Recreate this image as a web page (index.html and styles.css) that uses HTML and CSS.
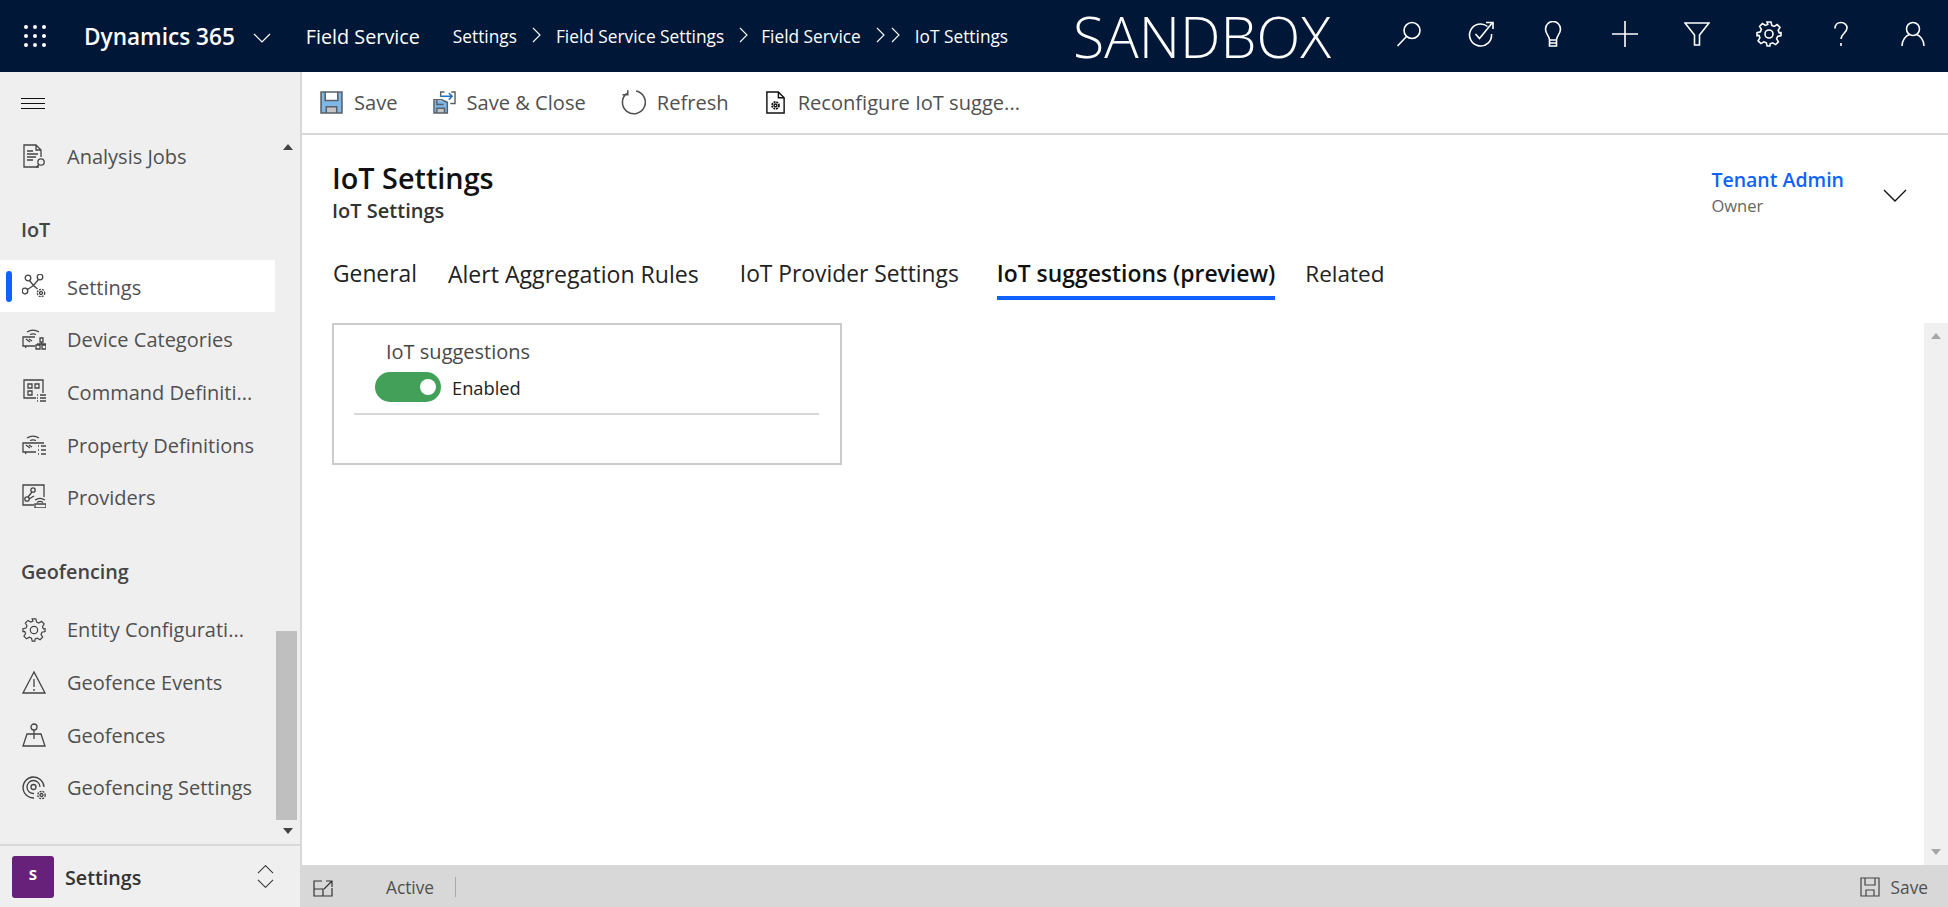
FILE: index.html
```html
<!DOCTYPE html>
<html lang="en">
<head>
<meta charset="utf-8">
<title>IoT Settings</title>
<link rel="stylesheet" href="styles.css">
</head>
<body>
<header class="topbar">
  <svg class="waffle" viewBox="0 0 22 22"><g fill="#fff"><circle cx="2" cy="2" r="2"/><circle cx="11" cy="2" r="2"/><circle cx="20" cy="2" r="2"/><circle cx="2" cy="11" r="2"/><circle cx="11" cy="11" r="2"/><circle cx="20" cy="11" r="2"/><circle cx="2" cy="20" r="2"/><circle cx="11" cy="20" r="2"/><circle cx="20" cy="20" r="2"/></g></svg>
  <span class="brand">Dynamics 365</span>
  <svg class="top-chev" viewBox="0 0 18 10"><path d="M1 1l8 8 8-8"/></svg>
  <span class="app">Field Service</span>
  <nav class="crumbs">
    <span>Settings</span>
    <svg class="crumb-chev" viewBox="0 0 9 16"><path d="M1 1l7 7-7 7"/></svg>
    <span>Field Service Settings</span>
    <svg class="crumb-chev tight" viewBox="0 0 9 16"><path d="M1 1l7 7-7 7"/></svg>
    <span>Field Service</span>
    <svg class="crumb-chev wide" viewBox="0 0 25 16"><path d="M1 1l7 7-7 7M16 1l7 7-7 7"/></svg>
    <span>IoT Settings</span>
  </nav>
  <span class="sandbox">SANDBOX</span>
  <div class="top-icons">
    <svg viewBox="0 0 26 26"><circle cx="16" cy="9.500" r="8"/><path d="M10.500 15.500L1.500 25"/></svg>
    <svg viewBox="0 0 26 26"><path d="M19.500 5.500A11 11 0 1 0 23.500 13"/><path d="M7.500 13l4 4.500L24.500 1.500M18 1.500h7v6.500"/></svg>
    <svg viewBox="0 0 26 26"><path d="M9.500 19c0-4-4-6-4-11a7.500 7.500 0 0 1 15 0c0 5-4 7-4 11zM9.500 19v6h7v-6M9.500 22h7"/></svg>
    <svg viewBox="0 0 26 26"><path d="M0 13h26M13 0v26"/></svg>
    <svg viewBox="0 0 26 26"><path d="M1 2h24L15.500 14v10h-5V14z"/></svg>
    <svg viewBox="0 0 26 26"><use href="#gear"/></svg>
    <svg viewBox="0 0 26 26"><path d="M7 7.500C7 4 9.500 1.500 13 1.500s6 2.500 6 5.500c0 5-6 5.500-6 11M13 22v3"/></svg>
    <svg viewBox="0 0 26 26"><circle cx="13" cy="8" r="6.500"/><path d="M2 25c0-6 4-10.500 7.500-11.500M24 25c0-6-4-10.500-7.500-11.500"/></svg>
  </div>
</header>

<svg class="defs" width="0" height="0">
  <defs>
    <g id="gear"><circle cx="13" cy="13" r="4"/><path d="M11 1h4l.8 3.400 2.400 1 3-1.800 2.800 2.800-1.800 3 1 2.400L25 11.600v3l-3.400.8-1 2.400 1.800 3-2.800 2.800-3-1.800-2.400 1L13.900 25h-2.800l-.8-3.200-2.400-1-3 1.800-2.800-2.800 1.800-3-1-2.400L1 14.600v-3l3.400-.8 1-2.400-1.800-3 2.800-2.800 3 1.800 2.400-1z"/></g>
  </defs>
</svg>

<div class="shell">
  <aside class="sidebar">
    <div class="ham"><span></span><span></span><span></span></div>
    <div class="nav-wrap">
      <div class="nav">
        <a class="item"><svg class="ico" viewBox="0 0 24 24"><path d="M17 23H2V1h12l5 5v7M14 1v5h5M5 7h6M5 10h11M5 13h9M5 16h6"/><circle cx="19" cy="18" r="3.200"/><path d="M17 20.500l-3 3"/></svg><span>Analysis Jobs</span></a>
        <div class="heading first">IoT</div>
        <a class="item low active"><svg class="ico" viewBox="0 0 24 24"><circle cx="6" cy="4" r="2.800"/><circle cx="18" cy="3" r="2.800"/><circle cx="3" cy="17" r="2.800"/><path d="M7.500 6.500l4 5L16.500 5.500M5.500 15.500l6-4 4 3.500"/><g transform="translate(19 19)"><circle r="1.500"/><circle r="3.700" stroke-dasharray="2 1"/></g></svg><span>Settings</span></a>
        <a class="item low"><svg class="ico" viewBox="0 0 24 24"><path d="M5 6a11 11 0 0 1 12 0M8 8.500a7 7 0 0 1 6 0M13 11H1v9h12M4 20l-.5 2M4 13l4 3M7 13l3 2M18 12h3v4h-3zM19.500 16v2M15 18h9M14 19h4v4h-4zM20 19h4v4h-4z"/></svg><span>Device Categories</span></a>
        <a class="item low"><svg class="ico" viewBox="0 0 24 24"><path d="M14 19H2V1h19v13M6 5h4v4H6zM13 5h4v4h-4zM6 12h4v4H6zM15 16h1M18 16h6M15 19h1M18 19h6M15 22h1M18 22h6"/></svg><span>Command Definiti...</span></a>
        <a class="item low"><svg class="ico" viewBox="0 0 24 24"><path d="M5 6a11 11 0 0 1 12 0M8 8.500a7 7 0 0 1 6 0M22 11H1v9h13M4 20l-.5 2M4 13l4 3M7 13l3 2M16 14h1M19 14h5M16 18h1M19 18h5M16 22h1M19 22h5"/></svg><span>Property Definitions</span></a>
        <a class="item low"><svg class="ico" viewBox="0 0 24 24"><path d="M22 13V1H1v20h11"/><circle cx="11" cy="6" r="2.200"/><circle cx="5" cy="15" r="2.200"/><path d="M10 8l-4 5M7 15l5-3M13 16a9 9 0 0 1 10 0M15 18.500a5 5 0 0 1 6 0M13 20h11v4H13z"/></svg><span>Providers</span></a>
        <div class="heading second">Geofencing</div>
        <a class="item"><svg class="ico" viewBox="0 0 26 26"><use href="#gear"/></svg><span>Entity Configurati...</span></a>
        <a class="item"><svg class="ico" viewBox="0 0 24 24"><path d="M12 2L1 23h22zM12 9v8M12 19v2"/></svg><span>Geofence Events</span></a>
        <a class="item"><svg class="ico" viewBox="0 0 24 24"><circle cx="12" cy="4" r="3"/><path d="M12 7v9M5 11h14l4 12H1zM1 23h22"/></svg><span>Geofences</span></a>
        <a class="item"><svg class="ico" viewBox="0 0 24 24"><path d="M12 22A10.500 10.500 0 1 1 22 11M12 17.500A6.500 6.500 0 1 1 18 11"/><circle cx="11.500" cy="11" r="2.500"/><g transform="translate(19.500 19)"><circle r="1.500"/><circle r="3.700" stroke-dasharray="2 1"/></g></svg><span>Geofencing Settings</span></a>
      </div>
      <div class="nav-scroll">
        <i class="tri up"></i>
        <div class="track"><div class="thumb"></div></div>
        <i class="tri down"></i>
      </div>
    </div>
    <div class="area">
      <span class="avatar">S</span>
      <span class="area-name">Settings</span>
      <svg class="updown" viewBox="0 0 18 24"><path d="M1 8.500l8-8 8 8M1 15.500l8 8 8-8"/></svg>
    </div>
  </aside>

  <main class="main">
    <div class="cmdbar">
      <button class="cmd"><svg class="cmd-ico" viewBox="0 0 22 22"><path class="fillblue" d="M1 1h20v20H1z"/><path class="fillwhite" d="M5 1h12v8H5z"/><path class="fillgrey" d="M6 15h10v6H6z"/><path d="M1 1h20v20H1zM5 1v8h12V1M6 21v-6h10v6"/></svg>Save</button>
      <button class="cmd"><svg class="cmd-ico" viewBox="0 0 24 24"><path class="fillblue" d="M1 10h14v13H1z"/><path class="fillgrey" d="M4 18h8v5H4z"/><path d="M1 9h8l6 3v11H1zM4 9v5h7M4 23v-5h8v5M8 6V1h4M19 1h4v12h-5"/><path class="arrow" d="M8 5.500h12M16.500 2l3.500 3.500L16.500 9"/></svg>Save &amp; Close</button>
      <button class="cmd"><svg class="cmd-ico plain" viewBox="0 0 24 24"><path d="M14.500 1A11 11 0 1 1 5.500 3.200M6.500 .3v4.200H1.500"/></svg>Refresh</button>
      <button class="cmd"><svg class="cmd-ico dark" viewBox="0 0 24 24"><path d="M3 1h12l6 6v16H3zM15 1v6h6"/><g transform="translate(12 15)"><circle r="1.500"/><circle r="3.600" stroke-width="1.800" stroke-dasharray="2 .9"/></g></svg>Reconfigure IoT sugge...</button>
    </div>
    <div class="form-head">
      <div class="titles">
        <h1>IoT Settings</h1>
        <div class="subtitle">IoT Settings</div>
      </div>
      <div class="owner">
        <div class="owner-text">
          <a class="owner-name">Tenant Admin</a>
          <div class="owner-role">Owner</div>
        </div>
        <svg class="owner-chev" viewBox="0 0 24 14"><path d="M1 1l11 11L23 1"/></svg>
      </div>
    </div>
    <div class="tabs">
      <a class="tab">General</a>
      <a class="tab alert">Alert Aggregation Rules</a>
      <a class="tab far">IoT Provider Settings</a>
      <a class="tab near current">IoT suggestions (preview)</a>
      <a class="tab last">Related</a>
    </div>
    <div class="content">
      <div class="canvas">
        <section class="card">
          <div class="field-label">IoT suggestions</div>
          <div class="toggle-row"><span class="toggle"><i></i></span><span>Enabled</span></div>
          <div class="rule"></div>
        </section>
      </div>
      <div class="main-scroll"><i class="tri up light"></i><i class="tri down light"></i></div>
    </div>
    <footer class="status">
      <svg class="exp" viewBox="0 0 20 17"><path d="M9 1H1v15h18V8M1 9h9v7M13 1h6v6M19 1l-8 8"/></svg>
      <span class="state">Active</span>
      <span class="sep"></span>
      <span class="status-save"><svg class="save-small" viewBox="0 0 20 20"><path d="M1 1h18v18H1zM5 1v7h10V1M6 19v-6h8v6"/></svg>Save</span>
    </footer>
  </main>
</div>
</body>
</html>
```

FILE: styles.css
```css
* { box-sizing: border-box; }
html, body { margin: 0; height: 100%; overflow: hidden; }
body {
  font-family: "Open Sans", "Noto Sans", sans-serif;
  color: #333;
  display: flex;
  flex-direction: column;
  background: #fff;
}
svg { fill: none; stroke: currentColor; flex: none; }
.defs { position: absolute; }
i { display: block; }

/* top bar */
.topbar {
  height: 72px;
  flex: none;
  background: #001737;
  color: #fff;
  display: flex;
  align-items: center;
  padding-left: 24px;
}
.waffle { width: 22px; height: 22px; margin-top: -1px; stroke: none; }
.brand { margin-left: 38px; font-size: 22.600px; font-weight: 600; white-space: nowrap; margin-top: 1px; }
.top-chev { width: 18px; height: 10px; margin-left: 18px; margin-top: 3px; stroke-width: 1.2; }
.app { margin-left: 35px; font-size: 19.800px; font-weight: 500; white-space: nowrap; margin-top: 1px; }
.crumbs { display: flex; align-items: center; margin-left: 33px; font-size: 17.300px; white-space: nowrap; }
.crumb-chev { width: 9px; height: 16px; margin: -3px 15px 0 15px; stroke-width: 1.1; }
.crumb-chev.tight { margin-right: 13px; }
.crumb-chev.wide { width: 25px; margin-right: 14px; }
.sandbox {
  margin-left: 65px;
  font-size: 57.300px;
  font-weight: 300;
  line-height: 72px;
  white-space: nowrap;
}
.top-icons {
  margin-left: auto;
  padding-right: 22px;
  display: flex;
  gap: 46px;
  margin-top: -4px;
  align-items: center;
}
.top-icons svg { width: 26px; height: 26px; stroke-width: 1.6; }

.shell { flex: 1; min-height: 0; display: flex; }

/* sidebar */
.sidebar {
  width: 302px;
  flex: none;
  background: #efefef;
  border-right: 2px solid #d8d8d8;
  display: flex;
  flex-direction: column;
}
.ham {
  height: 58px;
  flex: none;
  padding: 26px 0 0 21px;
  display: flex;
  flex-direction: column;
  gap: 4px;
}
.ham span { width: 24px; height: 1px; background: #111; display: block; }
.nav-wrap { flex: 1; min-height: 0; display: flex; border-bottom: 2px solid #d8d8d8; }
.nav { width: 275px; flex: none; }
.item {
  height: 52.600px;
  display: flex;
  align-items: center;
  padding-left: 22px;
  gap: 21px;
  font-size: 20px;
  color: #505050;
  white-space: nowrap;
  position: relative;
}
.item.low span { padding-top: 3px; }
.ico { width: 24px; height: 24px; stroke-width: 1.3; color: #444; }
.item.active { background: #fff; }
.item.active::before {
  content: "";
  position: absolute;
  left: 6px;
  top: 11px;
  width: 6px;
  height: 31px;
  border-radius: 3px;
  background: #0f62fe;
}
.heading {
  height: 57px;
  padding: 11px 0 0 21px;
  font-size: 19.800px;
  font-weight: 600;
  color: #444;
}
.heading.first { margin-top: 20px; padding-top: 13px; }
.heading.second { margin-top: 24px; }
.nav-scroll {
  width: 23px;
  margin-left: 1px;
  display: flex;
  flex-direction: column;
  align-items: center;
  padding-top: 14px;
}
.track { flex: 1; width: 100%; min-height: 0; display: flex; flex-direction: column; justify-content: flex-end; padding-bottom: 8px; }
.thumb { height: 189px; background: #bfbfbf; width: 21px; }
.tri { width: 0; height: 0; border-left: 5.500px solid transparent; border-right: 5.500px solid transparent; }
.tri.up { border-bottom: 6px solid #444; }
.tri.down { border-top: 6px solid #444; margin-bottom: 10px; }
.tri.light.up { border-bottom-color: #a6a6a6; }
.tri.light.down { border-top-color: #a6a6a6; }
.area {
  height: 61px;
  flex: none;
  display: flex;
  align-items: center;
  padding-left: 12px;
  font-size: 19.700px;
  font-weight: 600;
  color: #333;
}
.avatar {
  width: 42px;
  height: 42px;
  background: #68217a;
  color: #fff;
  border-radius: 3px;
  display: flex;
  align-items: center;
  justify-content: center;
  font-size: 15px;
  font-weight: 700;
  padding-bottom: 6px;
}
.area-name { margin-left: 11px; padding-top: 2px; }
.updown { width: 17px; height: 23px; margin-left: auto; margin-right: 26px; stroke-width: 1.1; }

/* main */
.main { flex: 1; min-width: 0; display: flex; flex-direction: column; }
.cmdbar {
  height: 63px;
  flex: none;
  border-bottom: 2px solid #d8d8d8;
  display: flex;
  align-items: center;
  padding-left: 18px;
  gap: 35px;
}
.cmd {
  border: 0;
  background: none;
  padding: 0;
  font: inherit;
  font-size: 20.100px;
  color: #505050;
  display: flex;
  align-items: center;
  gap: 11px;
  white-space: nowrap;
}
.cmd-ico { width: 23px; height: 23px; stroke-width: 1.5; color: #5a6068; }
.cmd-ico.plain { width: 25px; height: 25px; color: #505050; }
.cmd-ico.dark { color: #111; }
.fillblue { fill: #7db8e8; stroke: none; }
.fillwhite { fill: #fff; stroke: none; }
.fillgrey { fill: #c4c4c4; stroke: none; }
.arrow { stroke: #1f6fc0; }
.form-head {
  height: 105px;
  flex: none;
  padding: 23px 41px 0 30px;
  display: flex;
  justify-content: space-between;
}
h1 { margin: 0; font-size: 28.800px; line-height: 40px; font-weight: 600; color: #111; }
.subtitle { font-size: 20px; line-height: 28px; font-weight: 600; color: #333; margin-top: -1px; }
.owner { display: flex; align-items: flex-start; gap: 39px; }
.owner-name { display: block; font-size: 19.500px; line-height: 26px; font-weight: 600; color: #0f62fe; margin-top: 9px; }
.owner-role { font-size: 16.500px; line-height: 24px; color: #666; margin-top: 1px; }
.owner-chev { width: 24px; height: 14px; margin-top: 31px; stroke-width: 1.4; color: #111; }
.tabs {
  height: 83px;
  flex: none;
  padding: 0 0 0 31px;
  display: flex;
  align-items: flex-start;
  gap: 31px;
}
.tab { font-size: 22.800px; line-height: 30px; padding: 19px 0 7px; color: #222; white-space: nowrap; }
.tab.alert { font-size: 23.100px; }
.tab.far { margin-left: 10px; }
.tab.near { margin-left: 7px; font-size: 22.900px; }
.tab.last { font-size: 22.500px; margin-left: -1px; }
.tab.current { font-weight: 600; color: #111; border-bottom: 4px solid #0f62fe; }
.content { flex: 1; min-height: 0; display: flex; }
.canvas { flex: 1; min-width: 0; padding: 0 0 0 30px; }
.card {
  width: 510px;
  height: 142px;
  border: 2px solid #ccc;
  padding: 13px 21px 0 20px;
}
.field-label { padding-left: 32px; font-size: 20px; line-height: 28px; color: #484848; }
.toggle-row { display: flex; align-items: center; gap: 11px; padding-left: 21px; margin-top: 6px; font-size: 18.300px; color: #222; }
.toggle { width: 66px; height: 30px; border-radius: 15px; background: #43a058; display: flex; align-items: center; justify-content: flex-end; padding-right: 5px; }
.toggle i { width: 16px; height: 16px; border-radius: 50%; background: #fff; }
.rule { height: 2px; background: #d8d8d8; margin-top: 11px; }
.main-scroll {
  width: 24px;
  flex: none;
  background: #f0f0f0;
  display: flex;
  flex-direction: column;
  align-items: center;
  justify-content: space-between;
  padding-top: 10px;
}
.main-scroll .tri.down { margin-bottom: 10px; }
.status {
  height: 42px;
  flex: none;
  background: #d8d8d8;
  display: flex;
  align-items: center;
  padding: 2px 20px 0 11px;
  font-size: 17.300px;
  color: #505050;
}
.exp { width: 20px; height: 17px; margin-top: 2px; stroke-width: 1.2; color: #333; }
.state { margin-left: 53px; }
.sep { width: 1px; height: 20px; background: #aaa; margin-left: 21px; }
.status-save { margin-left: auto; display: flex; align-items: center; gap: 11px; }
.save-small { width: 20px; height: 20px; stroke-width: 1.2; color: #444; }
```
